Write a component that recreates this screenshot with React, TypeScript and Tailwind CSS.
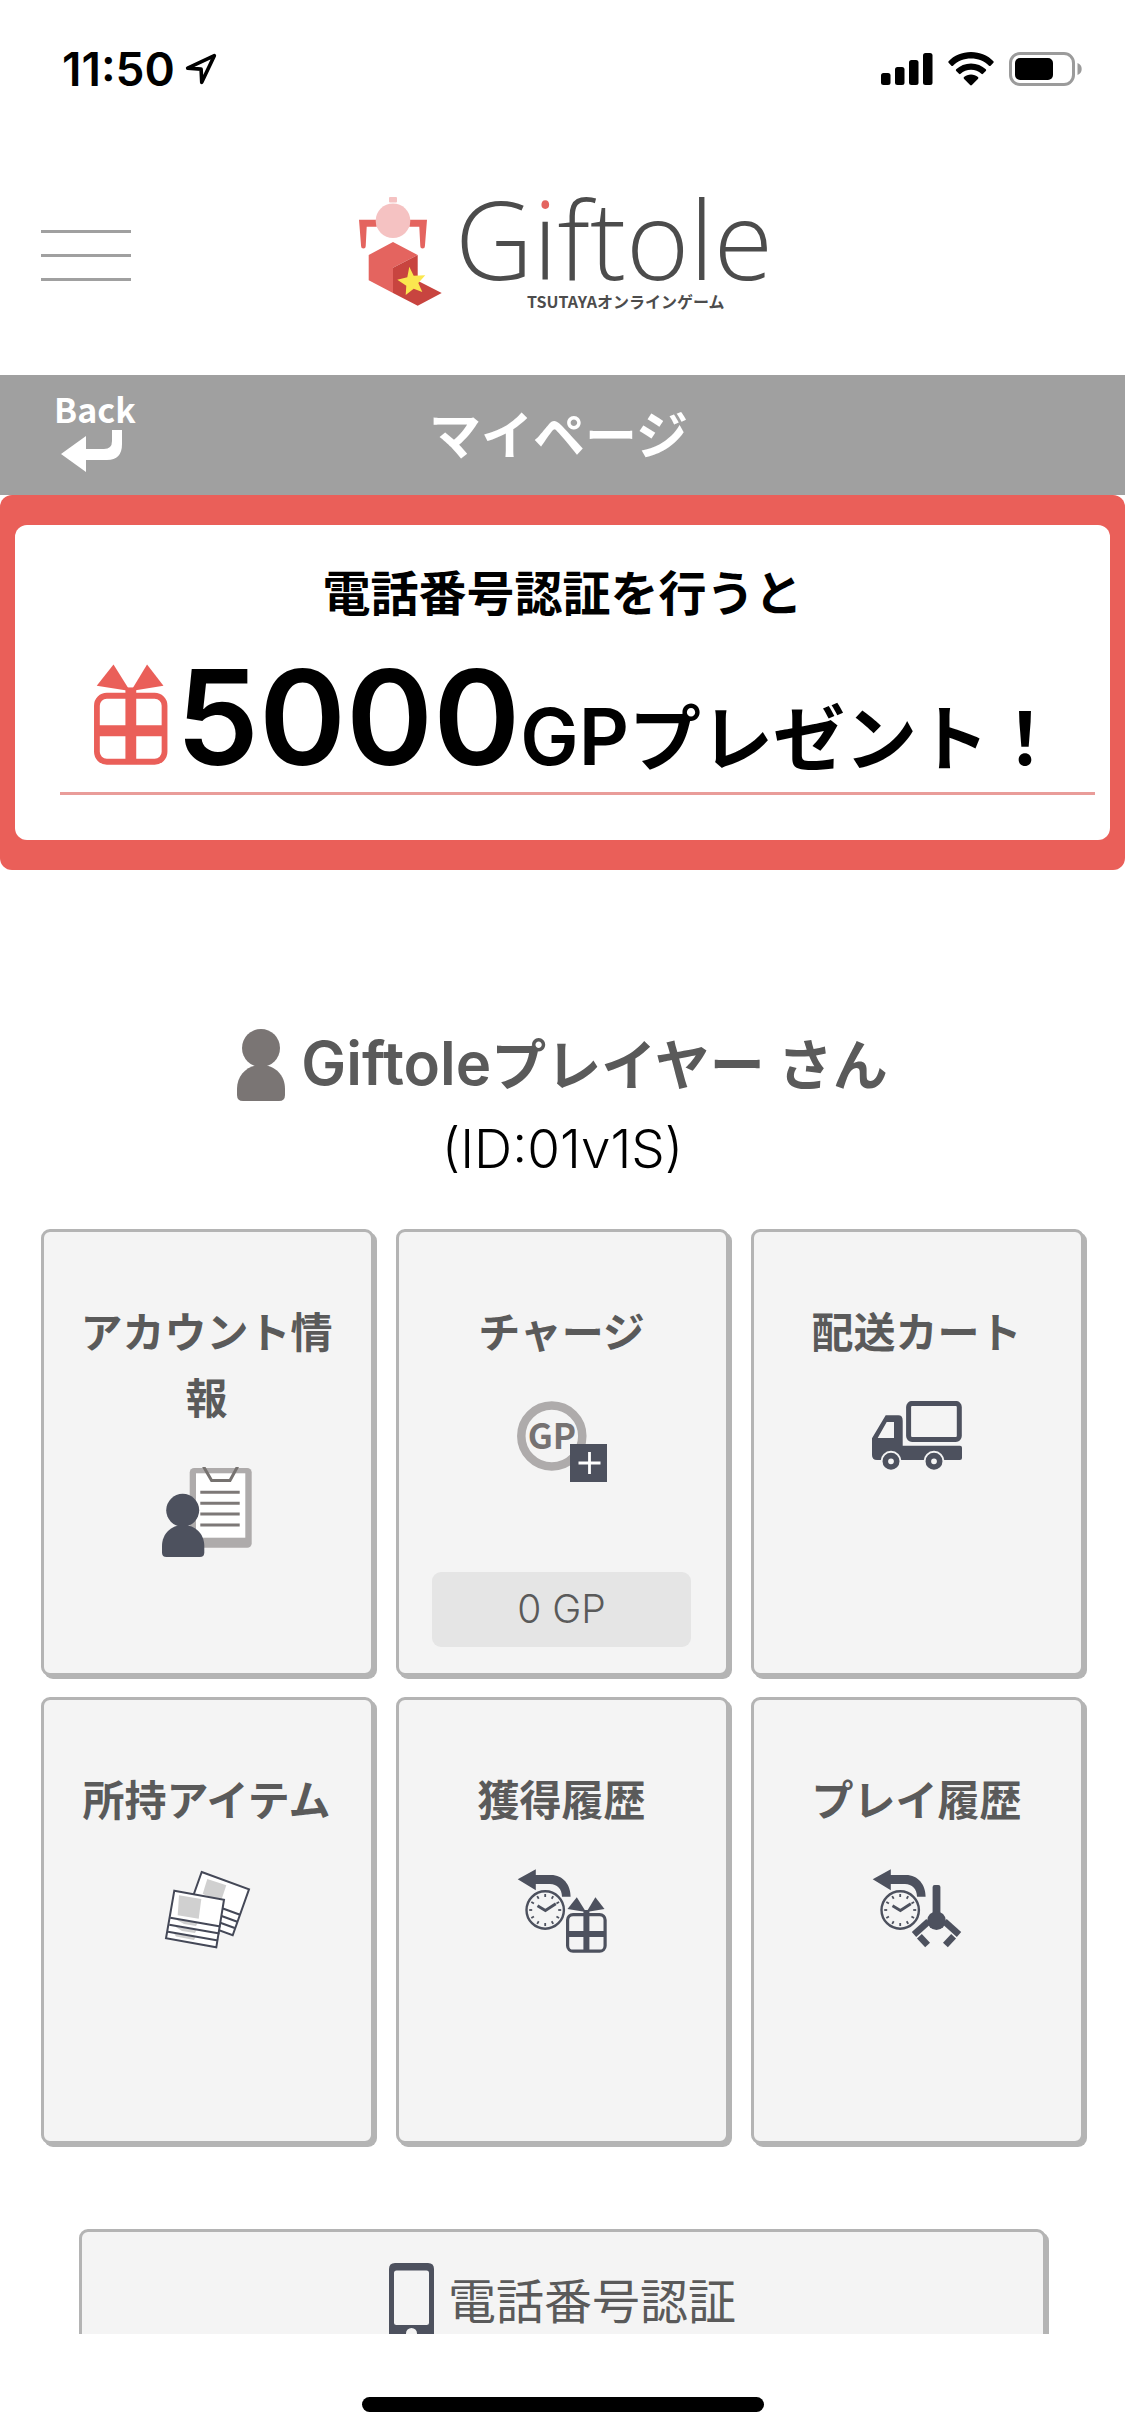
import type { ReactNode } from "react";

const ink = "#4d515e";

function StatusBar() {
  return (
    <div className="flex h-[138px] shrink-0 items-center justify-between pl-[62px] pr-[43px]">
      <div className="flex items-center gap-[10px]">
        <span className="text-[46px] font-semibold leading-none text-black">11:50</span>
        <svg width="32" height="32" viewBox="0 0 30 30" fill="none" stroke="#000" strokeWidth="3.4" strokeLinejoin="round" aria-hidden="true">
          <path d="M27.5 2.5 2.5 14.2l12.6.9.6 12.4z" />
        </svg>
      </div>
      <div className="flex items-center gap-[15px]">
        <svg width="52" height="34" viewBox="0 0 52 34" aria-hidden="true">
          <rect x="0" y="21" width="9.5" height="12" rx="2.5" />
          <rect x="14" y="15" width="9.5" height="18" rx="2.5" />
          <rect x="28" y="8" width="9.5" height="25" rx="2.5" />
          <rect x="42" y="1" width="9.5" height="32" rx="2.5" />
        </svg>
        <svg width="46" height="34" viewBox="0 0 46 34" aria-hidden="true">
          <path d="M23 0C14 0 6 3.500 .6 9.200c-.5.5-.5 1.100 0 1.600l2.800 2.900c.5.500 1.100.500 1.600 0C9.800 9 16 6.600 23 6.600s13.200 2.400 18 7.100c.5.5 1.100.5 1.600 0l2.800-2.900c.5-.5.5-1.100 0-1.600C40 3.500 32 0 23 0z" />
          <path d="M23 11.400c-5.800 0-11 2.200-14.800 5.900-.5.5-.5 1.200 0 1.700l2.800 2.800c.5.500 1.100.500 1.600 0 2.800-2.600 6.400-4 10.400-4s7.600 1.400 10.400 4c.5.500 1.100.500 1.600 0l2.800-2.800c.5-.500.500-1.200 0-1.700-3.800-3.700-9-5.900-14.800-5.900z" />
          <path d="M23 22.600c-2.700 0-5.100.9-7 2.500-.5.5-.5 1.100-.1 1.600l6.200 6.300c.5.500 1.300.500 1.800 0l6.200-6.300c.4-.5.4-1.100-.1-1.600-1.900-1.600-4.300-2.500-7-2.500z" />
        </svg>
        <svg width="73" height="34" viewBox="0 0 73 34" aria-hidden="true">
          <rect x="1.500" y="1.500" width="63" height="31" rx="9.500" fill="none" stroke="#9b9b9b" strokeWidth="3" />
          <rect x="6" y="6" width="38" height="22" rx="5" />
          <path d="M68.500 11c2.700 1 4.200 3.200 4.200 6s-1.500 5-4.200 6z" fill="#9b9b9b" />
        </svg>
      </div>
    </div>
  );
}

function Logo() {
  return (
    <svg width="452" height="121" viewBox="0 0 452 121" className="overflow-visible" role="img" aria-label="Giftole TSUTAYAオンラインゲーム">
      <defs>
        <linearGradient id="letter-i" gradientUnits="userSpaceOnUse" x1="0" y1="0" x2="0" y2="40">
          <stop offset="0.5" stopColor="#e4645f" />
          <stop offset="0.5" stopColor="#4c4c4c" />
        </linearGradient>
      </defs>
      <path d="M22 24.700h17.700v7h-10L28.700 51.300a2.300 2.300 0 0 1-4.600 0z" fill="#e4645f" />
      <path d="M90 24.700H72.300v7h10l1 19.600a2.300 2.300 0 0 0 4.600 0z" fill="#e4645f" />
      <rect x="52" y="2" width="8" height="5.500" rx="1" fill="#f5c2c2" />
      <circle cx="56" cy="25.700" r="17.300" fill="#f5c2c2" />
      <path d="M31.700 60 56 47l24.700 13L56 72.700V98L31.700 85.300z" fill="#e4645f" />
      <path d="M56 72.700 80.700 60v25.700l24 12.300-24 12.700L56 98z" fill="#c8443f" />
      <path d="M72.300 71.700 76.700 80.700 88.300 80.300 81.300 88 85.300 97 76.700 93.700 68.700 100 69.300 90.700 60.300 84.700 70.300 82.300z" fill="#fbe74f" />
      <text x="118" y="85" fontSize="108" className="fill-[#4c4c4c] font-[Open_Sans] font-light">
        G<tspan fill="url(#letter-i)">i</tspan>ftole
      </text>
      <text x="190" y="113" fontSize="16" className="fill-[#4c4c4c] font-[Noto_Sans_CJK_JP] font-bold">TSUTAYAオンラインゲーム</text>
    </svg>
  );
}

function Header() {
  return (
    <header className="grid h-[237px] grid-cols-[1fr_auto_1fr] items-center px-[41px] pb-[2px]">
      <button type="button" aria-label="メニュー" className="flex w-[90px] flex-col gap-[21px]">
        <span className="h-[3px] bg-[#a0a0a0]" />
        <span className="h-[3px] bg-[#a0a0a0]" />
        <span className="h-[3px] bg-[#a0a0a0]" />
      </button>
      <Logo />
    </header>
  );
}

function TitleBar() {
  return (
    <div className="grid h-[120px] grid-cols-[1fr_auto_1fr] items-center bg-[#a0a0a0] pl-[54px] pr-[62px] text-white">
      <a href="#back" className="flex w-[84px] flex-col items-start gap-[3px] pb-[8px]">
        <span className="font-[Noto_Sans_CJK_JP] text-[34px] font-bold leading-[36px]">Back</span>
        <svg width="61" height="42" viewBox="0 0 61 42" fill="currentColor" className="ml-[7px]" aria-hidden="true">
          <path d="M0 24 25 6v13h18q8 0 8-8V0h10v14q0 16-15 16H25v12z" />
        </svg>
      </a>
      <h1 className="pt-[4px] text-[52px] font-bold leading-[54px]">マイページ</h1>
    </div>
  );
}

function GiftShape() {
  return (
    <>
      <path d="M59.800 28.300 69 43 50.500 40z" fill="currentColor" />
      <path d="M78.400 28.300 87.500 40 69.500 43z" fill="currentColor" />
      <rect x="50.600" y="45.600" width="37.500" height="36.600" rx="5.500" fill="none" stroke="currentColor" strokeWidth="3.200" />
      <path d="M66.400 41h6v42h-6z" fill="currentColor" />
      <path d="M50 62h39v6H50z" fill="currentColor" />
    </>
  );
}

function Banner() {
  return (
    <section className="rounded-[12px] bg-[#ea5f59] px-[15px] py-[30px] text-black">
      <div className="rounded-[12px] bg-white pb-[45px] pl-[45px] pr-[15px] pt-[33px]">
        <p className="pr-[30px] text-center text-[48px] font-bold leading-[72px]">電話番号認証を行うと</p>
        <p className="mt-[12px] flex items-baseline justify-center whitespace-nowrap border-b-[3px] border-[#e99c99] text-[132px] font-semibold leading-[150px]">
          <svg width="74" height="101" viewBox="49 28 41 56" className="mr-[8px] text-[#ea5f59]" aria-hidden="true">
            <GiftShape />
          </svg>
          <span>5000</span>
          <span className="text-[78px] leading-none">GP</span>
          <span className="text-[72px] font-bold leading-none">プレゼント！</span>
        </p>
      </div>
    </section>
  );
}

function PersonIcon() {
  return (
    <svg width="48" height="72" viewBox="0 0 48 72" fill="#7a7574" aria-hidden="true">
      <circle cx="24" cy="19" r="19" />
      <path d="M0 66V60C0 46 10 36 24 36s24 10 24 24v6q0 6-6 6H6q-6 0-6-6z" />
    </svg>
  );
}

function IconBox({ children }: { children: ReactNode }) {
  return (
    <svg width="90" height="90" viewBox="0 0 90 90" className="mt-[35px] shrink-0 text-[#4d515e]" aria-hidden="true">
      {children}
    </svg>
  );
}

function AccountIcon() {
  return (
    <IconBox>
      <rect x="27.700" y="1" width="62" height="79.700" rx="4.500" fill="#aeabab" />
      <rect x="34" y="6.300" width="49.300" height="64.400" fill="#fff" />
      <path d="M38.300 25.300h39.400M38.300 36.300h39.400M38.300 47h39.400M38.300 58h39.400" stroke="#7d7877" strokeWidth="3" />
      <path d="M41.500-.500 49.600 13.500H68L75.600-.500" fill="none" stroke="#767270" strokeWidth="3" />
      <circle cx="20.700" cy="43.300" r="16.500" fill={ink} />
      <path d="M0 85.500V79C0 67 9 58 21.200 58s21.100 9 21.100 21v6.500q0 4.500-4.500 4.500H4.500Q0 90 0 85.500z" fill={ink} />
    </IconBox>
  );
}

function ChargeIcon() {
  return (
    <IconBox>
      <circle cx="34.800" cy="35" r="30.500" fill="none" stroke="#aeabab" strokeWidth="8.500" />
      <text x="35" y="47.500" fontSize="35" textAnchor="middle" className="fill-[#767272] font-[Noto_Sans_CJK_JP] font-bold">GP</text>
      <rect x="53" y="43" width="37" height="38" fill={ink} />
      <path d="M61.500 62h22M72.500 51v22" stroke="#fff" strokeWidth="2.800" />
    </IconBox>
  );
}

function TruckIcon() {
  return (
    <IconBox>
      <rect x="36.600" y="2.400" width="50.700" height="36.200" rx="3.500" fill="none" stroke={ink} strokeWidth="5" />
      <path
        fillRule="evenodd"
        fill={ink}
        d="M0 37.300 13.700 14.300h12.600q4.400 0 4.400 5.400v25H88q2 0 2 2v10.300q0 2-2 2H5Q0 59 0 54zM5.700 37H22V21h-7.300z"
      />
      <circle cx="19" cy="60.300" r="10.500" fill="#f4f4f4" />
      <circle cx="62" cy="60.300" r="10.500" fill="#f4f4f4" />
      <circle cx="19" cy="60.300" r="5.700" fill="none" stroke={ink} strokeWidth="5.600" />
      <circle cx="62" cy="60.300" r="5.700" fill="none" stroke={ink} strokeWidth="5.600" />
    </IconBox>
  );
}

function ItemsIcon() {
  return (
    <IconBox>
      <path d="M39.700 3 87 20.300 70.700 66.300 23.400 49z" fill="#fff" />
      <path d="M45.300 10 64.300 16.300 59 32 40.700 25z" fill="#d0d0d0" />
      <path d="M78 45.700 50 35.500M75.300 52.700 50 43.500M72.700 59 50 50.700" stroke="#444857" strokeWidth="2" />
      <path d="M39.700 3 87 20.300 70.700 66.300 23.400 49z" fill="none" stroke="#444857" strokeWidth="2" />
      <path d="M12.300 21.700 62 30.700 54.300 78.300 4 69.300z" fill="#fff" stroke="#444857" strokeWidth="2" />
      <path d="M17 26.300 39.300 30 36.700 49.700 15.700 46.300z" fill="#d0d0d0" />
      <path d="M14 50.500 35.500 54 34 57 22 55zM13 57.500 34.500 61 33 64 20 62zM12 64.500 33.500 68 32 71 14 67.500z" fill="#d0d0d0" />
      <path d="M8.300 48.700 58.500 57.500M7.300 55.700 57.500 64.500M6 62.700 56 71.500" stroke="#444857" strokeWidth="2" />
    </IconBox>
  );
}

function HistoryClock() {
  const ticks = Array.from({ length: 12 }, (_, i) => i * 30);
  return (
    <>
      <path d="M.7 10.300 18.800.3V6H34c12 0 19.600 9.700 19.600 21.700H45C45 20 40 15 33 15H18.800v6.300z" fill={ink} />
      <circle cx="28.200" cy="41" r="18.700" fill="none" stroke={ink} strokeWidth="2.400" />
      {ticks.map((a) => (
        <path key={a} d="M28.200 25v3" stroke={ink} strokeWidth="1.800" transform={`rotate(${a} 28.200 41)`} />
      ))}
      <path d="M20.500 36.800 28.400 41.500 38.800 34.800" fill="none" stroke={ink} strokeWidth="2.800" />
    </>
  );
}

function WonIcon() {
  return (
    <IconBox>
      <HistoryClock />
      <GiftShape />
    </IconBox>
  );
}

function PlayIcon() {
  return (
    <IconBox>
      <HistoryClock />
      <rect x="60.600" y="16" width="7.800" height="32" rx="2" fill={ink} />
      <circle cx="64.500" cy="51.700" r="9.300" fill={ink} />
      <g fill="none" stroke={ink} strokeWidth="6.600">
        <path d="M56.500 52.500 42 65.500" />
        <path d="M72.500 52.500 87 65.500" />
        <path d="M47.400 67.200 55.600 76" />
        <path d="M81.600 67.200 73.400 76" />
      </g>
    </IconBox>
  );
}

function Card({ title, icon, badge }: { title: string; icon: ReactNode; badge?: string }) {
  return (
    <a
      href="#menu"
      className="flex min-h-[447px] flex-col items-center rounded-[9px] border-[3px] border-[#b4b4b4] bg-[#f4f4f4] pb-[26px] pl-[33px] pr-[35px] pt-[68px] text-[#5a5a5a] shadow-[3px_3px_0_#b4b4b4]"
    >
      <span className="break-all text-center text-[42px] font-bold leading-[66px]">{title}</span>
      {icon}
      {badge && (
        <span className="mt-auto flex h-[75px] w-full items-center justify-center rounded-[9px] bg-[#e5e5e5] text-[39px] font-light">
          {badge}
        </span>
      )}
    </a>
  );
}

function PhoneIcon() {
  return (
    <svg width="45" height="78" viewBox="0 0 45 78" aria-hidden="true">
      <path
        fill={ink}
        fillRule="evenodd"
        d="M6 0h33q6 0 6 6v66q0 6-6 6H6q-6 0-6-6V6q0-6 6-6zM7.500 7.500q-2.500 0-2.500 2.500v49.500q0 2.500 2.500 2.500h30q2.500 0 2.500-2.500V10q0-2.500-2.500-2.500z"
      />
      <circle cx="22.500" cy="70.500" r="5.500" fill="#f4f4f4" />
    </svg>
  );
}

export default function App() {
  return (
    <div className="flex h-screen flex-col bg-white font-['Inter','Noto_Sans_CJK_JP',sans-serif]">
      <StatusBar />
      <main className="min-h-0 flex-1 overflow-y-auto [scrollbar-width:none]">
        <Header />
        <TitleBar />
        <Banner />
        <section className="mt-[159px] text-center">
          <h2 className="flex items-center justify-center gap-[16px] whitespace-nowrap text-[55px] font-bold leading-[72px] text-[#5a5a5a]">
            <PersonIcon />
            <span>
              <span className="text-[60px] font-semibold leading-none">Giftole</span>プレイヤー さん
            </span>
          </h2>
          <p className="mt-[15px] text-[53px] font-light leading-[66px] text-black">(ID:01v1S)</p>
        </section>
        <nav className="mt-[47px] grid grid-cols-3 gap-x-[22px] gap-y-[21px] px-[41px]">
          <Card title="アカウント情報" icon={<AccountIcon />} />
          <Card title="チャージ" icon={<ChargeIcon />} badge="0 GP" />
          <Card title="配送カート" icon={<TruckIcon />} />
          <Card title="所持アイテム" icon={<ItemsIcon />} />
          <Card title="獲得履歴" icon={<WonIcon />} />
          <Card title="プレイ履歴" icon={<PlayIcon />} />
        </nav>
        <div className="mb-[60px] mt-[85px] px-[79px]">
          <button
            type="button"
            className="flex w-full items-center justify-center gap-[14px] rounded-[9px] border-[3px] border-[#b4b4b4] bg-[#f4f4f4] py-[31px] text-[48px] leading-[72px] text-[#5a5a5a] shadow-[3px_3px_0_#b4b4b4]"
          >
            <PhoneIcon />
            電話番号認証
          </button>
        </div>
      </main>
      <footer className="flex h-[102px] shrink-0 items-end justify-center bg-white pb-[24px]">
        <div className="h-[15px] w-[402px] rounded-full bg-black" />
      </footer>
    </div>
  );
}
